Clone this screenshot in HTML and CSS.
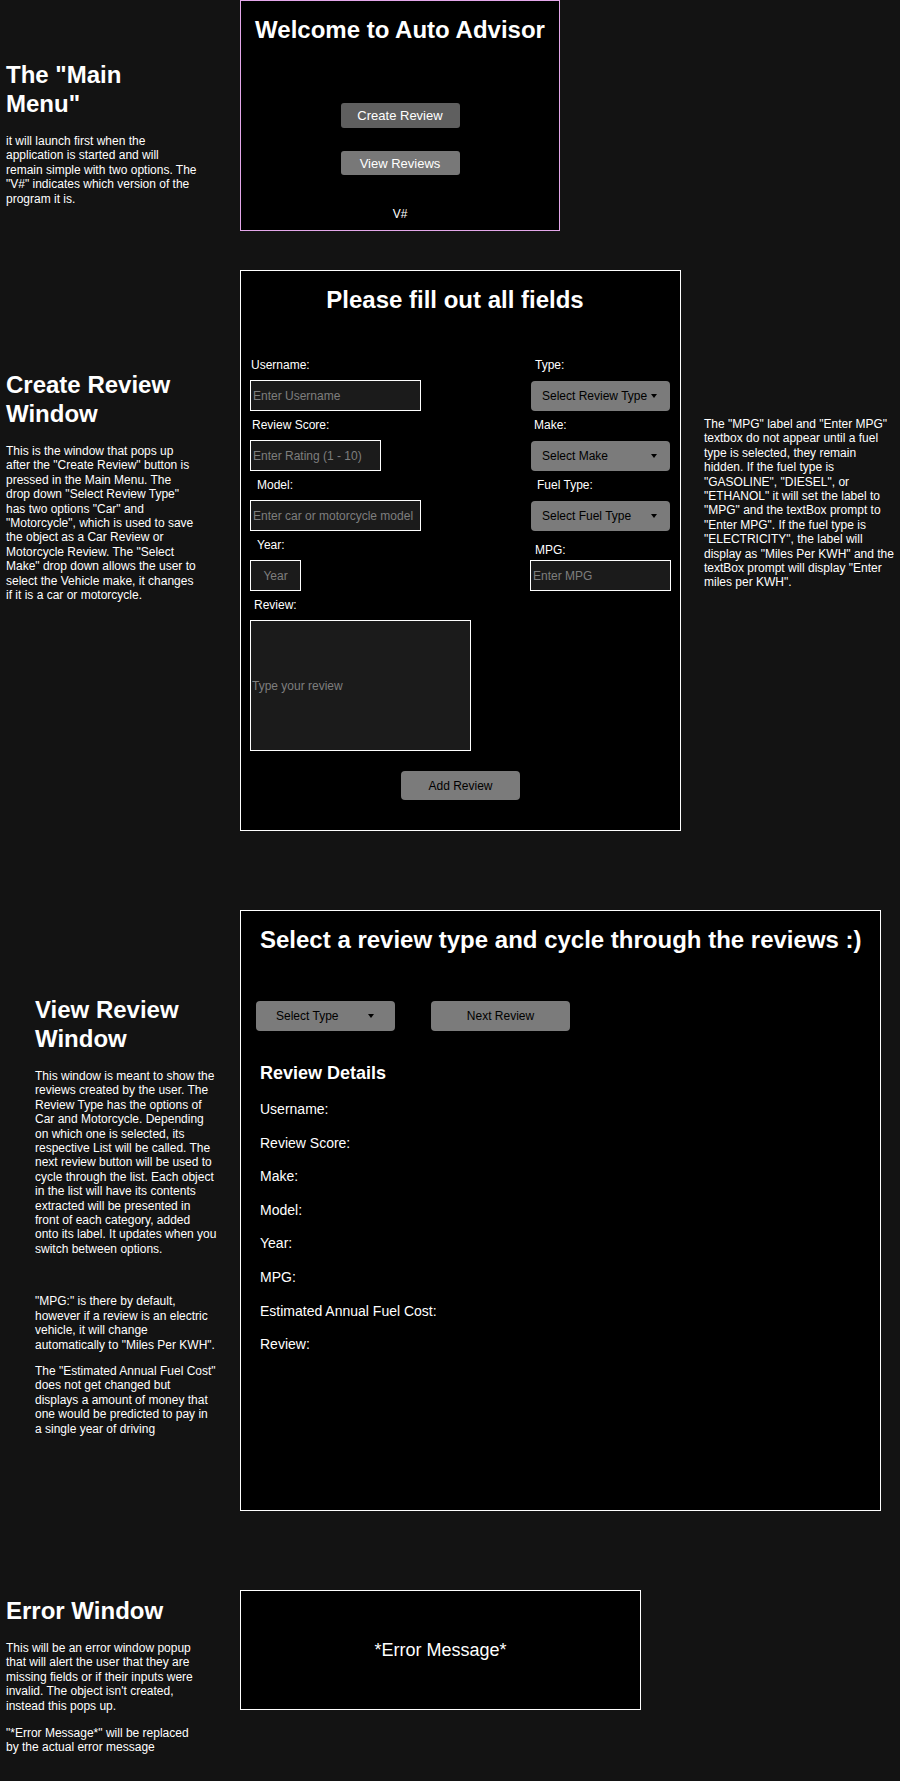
FILE: index.html
```html
<!DOCTYPE html>
<html lang="en">
<head>
<meta charset="utf-8">
<title>Auto Advisor – Window Designs</title>
<link rel="stylesheet" href="styles.css">
</head>
<body>
<main class="page">

  <section class="row row-menu">
    <div class="notes notes-menu">
      <h2 class="notes-title">The "Main Menu"</h2>
      <p>it will launch first when the application is started and will remain simple with two options. The "V#" indicates which version of the program it is.</p>
    </div>
    <div class="win win-menu">
      <h1 class="win-title">Welcome to Auto Advisor</h1>
      <button class="menu-btn menu-btn-dark" type="button">Create Review</button>
      <button class="menu-btn menu-btn-light" type="button">View Reviews</button>
      <div class="version">V#</div>
    </div>
  </section>

  <section class="row row-create">
    <div class="notes notes-create">
      <h2 class="notes-title">Create Review Window</h2>
      <p>This is the window that pops up after the "Create Review" button is pressed in the Main Menu. The drop down "Select Review Type" has two options "Car" and "Motorcycle", which is used to save the object as a Car Review or Motorcycle Review. The "Select Make" drop down allows the user to select the Vehicle make, it changes if it is a car or motorcycle.</p>
    </div>
    <div class="win win-create">
      <h1 class="win-title form-title">Please fill out all fields</h1>
      <div class="form">
        <div class="col col-left">
          <label class="lbl ind-1">Username:</label>
          <input class="field field-wide" type="text" placeholder="Enter Username">
          <label class="lbl ind-2">Review Score:</label>
          <input class="field field-mid" type="text" placeholder="Enter Rating (1 - 10)">
          <label class="lbl ind-7">Model:</label>
          <input class="field field-wide" type="text" placeholder="Enter car or motorcycle model">
          <label class="lbl ind-7">Year:</label>
          <input class="field field-year" type="text" placeholder="Year">
          <label class="lbl ind-4">Review:</label>
          <input class="field field-review" type="text" placeholder="Type your review">
        </div>
        <div class="col col-right">
          <label class="lbl ind-5">Type:</label>
          <div class="dropdown"><span>Select Review Type</span><span class="caret"></span></div>
          <label class="lbl ind-4">Make:</label>
          <div class="dropdown"><span>Select Make</span><span class="caret"></span></div>
          <label class="lbl ind-7">Fuel Type:</label>
          <div class="dropdown"><span>Select Fuel Type</span><span class="caret"></span></div>
          <label class="lbl ind-5 lbl-mpg">MPG:</label>
          <input class="field field-mpg" type="text" placeholder="Enter MPG">
        </div>
      </div>
      <button class="gray-btn add-btn" type="button">Add Review</button>
    </div>
    <div class="side-note">
      <p>The "MPG" label and "Enter MPG" textbox do not appear until a fuel type is selected, they remain hidden. If the fuel type is "GASOLINE", "DIESEL", or "ETHANOL" it will set the label to "MPG" and the textBox prompt to "Enter MPG". If the fuel type is "ELECTRICITY", the label will display as "Miles Per KWH" and the textBox prompt will display "Enter miles per KWH".</p>
    </div>
  </section>

  <section class="row row-view">
    <div class="notes notes-view">
      <h2 class="notes-title">View Review Window</h2>
      <p>This window is meant to show the reviews created by the user. The Review Type has the options of Car and Motorcycle. Depending on which one is selected, its respective List will be called. The next review button will be used to cycle through the list. Each object in the list will have its contents extracted will be presented in front of each category, added onto its label. It updates when you switch between options.</p>
      <p class="spaced">"MPG:" is there by default, however if a review is an electric vehicle, it will change automatically to "Miles Per KWH".</p>
      <p>The "Estimated Annual Fuel Cost" does not get changed but displays a amount of money that one would be predicted to pay in a single year of driving</p>
    </div>
    <div class="win win-view">
      <h1 class="win-title view-title">Select a review type and cycle through the reviews :)</h1>
      <div class="controls">
        <div class="dropdown dropdown-type"><span>Select Type</span><span class="caret"></span></div>
        <button class="gray-btn next-btn" type="button">Next Review</button>
      </div>
      <h3 class="details-title">Review Details</h3>
      <div class="details">
        <div class="detail">Username:</div>
        <div class="detail">Review Score:</div>
        <div class="detail">Make:</div>
        <div class="detail">Model:</div>
        <div class="detail">Year:</div>
        <div class="detail">MPG:</div>
        <div class="detail">Estimated Annual Fuel Cost:</div>
        <div class="detail">Review:</div>
      </div>
    </div>
  </section>

  <section class="row row-error">
    <div class="notes notes-error">
      <h2 class="notes-title">Error Window</h2>
      <p>This will be an error window popup that will alert the user that they are missing fields or if their inputs were invalid. The object isn't created, instead this pops up.</p>
      <p>"*Error Message*" will be replaced by the actual error message</p>
    </div>
    <div class="win win-error">
      <div class="error-msg">*Error Message*</div>
    </div>
  </section>

</main>
</body>
</html>
```

FILE: styles.css
```css
* {
  box-sizing: border-box;
}

html,
body {
  margin: 0;
  padding: 0;
}

body {
  background: #131313;
  color: #ffffff;
  font-family: "Liberation Sans", Arial, Helvetica, sans-serif;
  width: 900px;
  min-height: 1781px;
}

.page {
  display: flex;
  flex-direction: column;
}

/* ---------- rows ---------- */
.row {
  display: flex;
  align-items: flex-start;
}

.row-create {
  margin-top: 39px;
}

.row-view,
.row-error {
  margin-top: 79px;
}

/* ---------- left notes ---------- */
.notes {
  flex: 0 0 240px;
  width: 240px;
  padding-left: 6px;
}

.notes p,
.side-note p {
  font-size: 12px;
  line-height: 14.4px;
  margin: 0 0 13px;
  max-width: 191.7px;
}

.notes-title {
  font-size: 24px;
  line-height: 29px;
  font-weight: bold;
  margin: 0 0 16px;
  max-width: 185px;
}

.notes-menu {
  margin-top: 60px;
}

.notes-create {
  margin-top: 100px;
}

.notes-view {
  margin-top: 85px;
  padding-left: 35px;
}

.notes-view p {
  max-width: 181.7px;
  margin-bottom: 12px;
}

.notes-view .spaced {
  margin-top: 38px;
}

.notes-error {
  margin-top: 6px;
}

.side-note {
  width: 196px;
  margin-left: 23px;
  margin-top: 147px;
}

.side-note p {
  max-width: 192px;
}

/* ---------- windows ---------- */
.win {
  background: #000;
  border: 1px solid #ffffff;
  flex: none;
}

.win-title {
  font-size: 24px;
  line-height: 28px;
  font-weight: bold;
  margin: 0;
  white-space: nowrap;
}

/* main menu */
.win-menu {
  width: 320px;
  height: 231px;
  border-color: #e4a7ea;
  display: flex;
  flex-direction: column;
  align-items: center;
  padding-top: 14.5px;
}

.menu-btn {
  appearance: none;
  border: 0;
  padding: 0;
  width: 119px;
  border-radius: 3px;
  color: #fff;
  font-family: inherit;
  font-size: 13px;
}

.menu-btn-dark {
  background: #5f5f5f;
  height: 25px;
  margin-top: 59.5px;
}

.menu-btn-light {
  background: #787878;
  height: 24px;
  margin-top: 23px;
}

.version {
  font-size: 12px;
  line-height: 14px;
  margin-top: 32px;
}

/* create review */
.win-create {
  width: 441px;
  height: 561px;
  padding: 15px 9px 0;
}

.form-title {
  text-align: center;
  padding-right: 11px;
}

.form {
  display: flex;
  justify-content: space-between;
  margin-top: 44px;
}

.col {
  display: flex;
  flex-direction: column;
  align-items: flex-start;
}

.col-left {
  width: 221px;
}

.col-right {
  width: 141px;
}

.lbl {
  font-size: 12px;
  line-height: 14px;
  margin-bottom: 8px;
}

.ind-1 { padding-left: 1px; }
.ind-2 { padding-left: 2px; }
.ind-4 { padding-left: 4px; }
.ind-5 { padding-left: 5px; }
.ind-7 { padding-left: 7px; }

.lbl-mpg {
  margin-top: 5px;
  margin-bottom: 3px;
}

.field {
  appearance: none;
  background: #1b1b1b;
  border: 1px solid #ffffff;
  border-radius: 0;
  color: #fff;
  font-family: inherit;
  font-size: 12px;
  height: 31px;
  padding: 0 2px;
  margin: 0 0 7px;
  outline: none;
}

.field::placeholder {
  color: #7e7e7e;
  opacity: 1;
}

.field-wide { width: 171px; }
.field-mid { width: 131px; }
.field-year { width: 51px; text-align: center; }
.field-review { width: 221px; height: 131px; margin-bottom: 0; padding-left: 1px; }
.field-mpg { width: 141px; }

.dropdown {
  display: flex;
  align-items: center;
  justify-content: space-between;
  width: 139px;
  height: 30px;
  margin: 1px 0 7px 1px;
  padding: 0 13px 0 11px;
  background: #7b7b7b;
  border-radius: 4px;
  color: #000;
  font-size: 12px;
  white-space: nowrap;
}

.caret {
  flex: none;
  width: 0;
  height: 0;
  border-left: 3.5px solid transparent;
  border-right: 3.5px solid transparent;
  border-top: 4px solid #000;
}

.gray-btn {
  appearance: none;
  border: 0;
  padding: 0;
  background: #7b7b7b;
  border-radius: 4px;
  color: #000;
  font-family: inherit;
  font-size: 12px;
}

.add-btn {
  display: block;
  width: 119px;
  height: 29px;
  margin: 20px auto 0;
}

/* view reviews */
.win-view {
  width: 641px;
  height: 601px;
  padding: 15px 15px 0;
}

.view-title {
  padding-left: 4px;
}

.controls {
  display: flex;
  gap: 36px;
  margin-top: 47px;
}

.dropdown-type {
  margin: 0;
  padding: 0 21px 0 20px;
}

.next-btn {
  width: 139px;
  height: 30px;
}

.details-title {
  font-size: 18px;
  line-height: 22px;
  font-weight: bold;
  margin: 31px 0 0;
  padding-left: 4px;
}

.details {
  display: flex;
  flex-direction: column;
  gap: 17.6px;
  margin-top: 17px;
  padding-left: 4px;
}

.detail {
  font-size: 14px;
  line-height: 16px;
}

/* error */
.win-error {
  width: 401px;
  height: 120px;
  display: flex;
  align-items: center;
  justify-content: center;
}

.error-msg {
  font-size: 18px;
  line-height: 22px;
}
```
